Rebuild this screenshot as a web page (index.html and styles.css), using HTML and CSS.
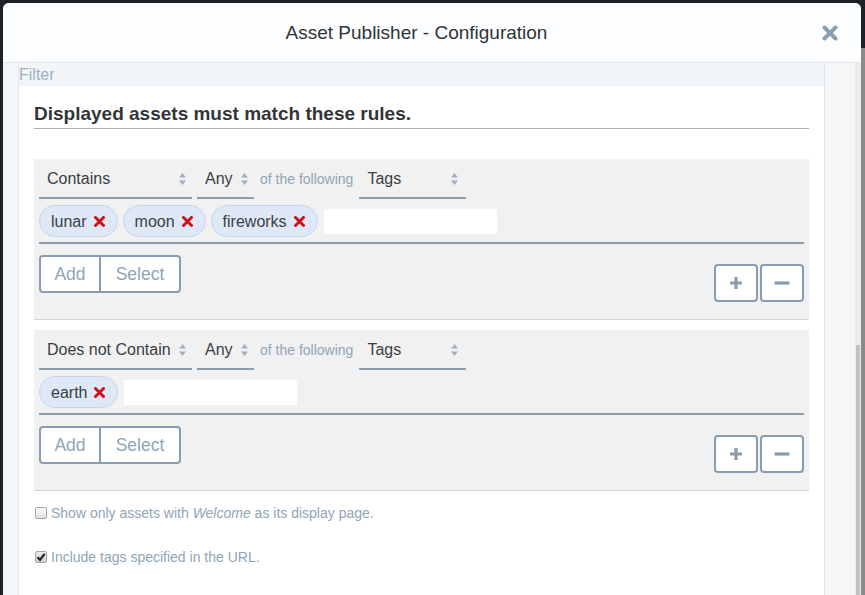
FILE: index.html
```html
<!DOCTYPE html>
<html lang="en">
<head>
<meta charset="utf-8">
<title>Asset Publisher - Configuration</title>
<link rel="stylesheet" href="styles.css">
</head>
<body>
<div class="screen">
  <div class="modal">
    <header class="modal-header">
      <h1 class="modal-title">Asset Publisher - Configuration</h1>
      <button class="close" type="button" aria-label="Close">
        <svg width="16" height="16" viewBox="0 0 16 16"><path d="M2.5 2.5 L13.5 13.5 M13.5 2.5 L2.5 13.5" stroke="#8aa0b2" stroke-width="4" stroke-linecap="round" fill="none"/></svg>
      </button>
    </header>
    <div class="modal-body">
      <div class="gutter-left"></div>
      <main class="panel">
        <div class="filter-bar">Filter</div>
        <div class="panel-inner">
          <h2 class="rules-title">Displayed assets must match these rules.</h2>

          <div class="rule">
            <div class="select-row">
              <div class="select sel-wide"><span>Contains</span><svg class="arrows" width="7" height="12" viewBox="0 0 7 12"><path d="M3.5 0 L7 4.5 L0 4.5 Z M3.5 12 L7 7.5 L0 7.5 Z" fill="#9fb1c1"/></svg></div>
              <div class="select sel-any"><span>Any</span><svg class="arrows" width="7" height="12" viewBox="0 0 7 12"><path d="M3.5 0 L7 4.5 L0 4.5 Z M3.5 12 L7 7.5 L0 7.5 Z" fill="#9fb1c1"/></svg></div>
              <span class="of-following">of the following</span>
              <div class="select sel-tags"><span>Tags</span><svg class="arrows" width="7" height="12" viewBox="0 0 7 12"><path d="M3.5 0 L7 4.5 L0 4.5 Z M3.5 12 L7 7.5 L0 7.5 Z" fill="#9fb1c1"/></svg></div>
            </div>
            <div class="tag-row">
              <span class="tag">lunar<svg class="x" width="11" height="11" viewBox="0 0 11 11"><path d="M1.5 1.5 L9.5 9.5 M9.5 1.5 L1.5 9.5" stroke="#d0101a" stroke-width="3" stroke-linecap="round"/></svg></span>
              <span class="tag">moon<svg class="x" width="11" height="11" viewBox="0 0 11 11"><path d="M1.5 1.5 L9.5 9.5 M9.5 1.5 L1.5 9.5" stroke="#d0101a" stroke-width="3" stroke-linecap="round"/></svg></span>
              <span class="tag">fireworks<svg class="x" width="11" height="11" viewBox="0 0 11 11"><path d="M1.5 1.5 L9.5 9.5 M9.5 1.5 L1.5 9.5" stroke="#d0101a" stroke-width="3" stroke-linecap="round"/></svg></span>
              <span class="tag-input"></span>
            </div>
            <div class="button-row">
              <div class="btn-group">
                <span class="btn btn-add">Add</span>
                <span class="btn btn-select">Select</span>
              </div>
              <div class="pm-group">
                <span class="pm"><svg width="14" height="14" viewBox="0 0 14 14"><path d="M7 1 V13 M1 7 H13" stroke="#8a9db0" stroke-width="3.2"/></svg></span>
                <span class="pm"><svg width="16" height="14" viewBox="0 0 16 14"><path d="M0.5 7 H15.5" stroke="#8a9db0" stroke-width="3.2"/></svg></span>
              </div>
            </div>
          </div>

          <div class="rule">
            <div class="select-row">
              <div class="select sel-wide"><span>Does not Contain</span><svg class="arrows" width="7" height="12" viewBox="0 0 7 12"><path d="M3.5 0 L7 4.5 L0 4.5 Z M3.5 12 L7 7.5 L0 7.5 Z" fill="#9fb1c1"/></svg></div>
              <div class="select sel-any"><span>Any</span><svg class="arrows" width="7" height="12" viewBox="0 0 7 12"><path d="M3.5 0 L7 4.5 L0 4.5 Z M3.5 12 L7 7.5 L0 7.5 Z" fill="#9fb1c1"/></svg></div>
              <span class="of-following">of the following</span>
              <div class="select sel-tags"><span>Tags</span><svg class="arrows" width="7" height="12" viewBox="0 0 7 12"><path d="M3.5 0 L7 4.5 L0 4.5 Z M3.5 12 L7 7.5 L0 7.5 Z" fill="#9fb1c1"/></svg></div>
            </div>
            <div class="tag-row">
              <span class="tag">earth<svg class="x" width="11" height="11" viewBox="0 0 11 11"><path d="M1.5 1.5 L9.5 9.5 M9.5 1.5 L1.5 9.5" stroke="#d0101a" stroke-width="3" stroke-linecap="round"/></svg></span>
              <span class="tag-input"></span>
            </div>
            <div class="button-row">
              <div class="btn-group">
                <span class="btn btn-add">Add</span>
                <span class="btn btn-select">Select</span>
              </div>
              <div class="pm-group">
                <span class="pm"><svg width="14" height="14" viewBox="0 0 14 14"><path d="M7 1 V13 M1 7 H13" stroke="#8a9db0" stroke-width="3.2"/></svg></span>
                <span class="pm"><svg width="16" height="14" viewBox="0 0 16 14"><path d="M0.5 7 H15.5" stroke="#8a9db0" stroke-width="3.2"/></svg></span>
              </div>
            </div>
          </div>

          <label class="check check-first">
            <span class="box"></span>
            <span>Show only assets with <em>Welcome</em> as its display page.</span>
          </label>
          <label class="check check-second">
            <span class="box box-checked"><svg width="10" height="10" viewBox="0 0 10 10"><path d="M1.5 5.2 L4 7.8 L8.6 1.8" stroke="#222" stroke-width="2.2" fill="none"/></svg></span>
            <span>Include tags specified in the URL.</span>
          </label>
        </div>
      </main>
      <div class="gutter-right"></div>
      <div class="scrollbar"><div class="track"></div><div class="thumb"></div></div>
    </div>
  </div>
  <div class="edge"><div class="edge-top"></div><div class="edge-bottom"></div></div>
</div>
</body>
</html>
```

FILE: styles.css
```css
* { box-sizing: border-box; }
html, body { margin: 0; padding: 0; }
body {
  width: 865px;
  height: 595px;
  overflow: hidden;
  background: #1b2126;
  font-family: "Liberation Sans", Arial, sans-serif;
}
.screen {
  display: flex;
  height: 595px;
  padding: 3px 0 0 3px;
}
.modal {
  width: 858px;
  height: 592px;
  display: flex;
  flex-direction: column;
  background: #f5f7f9;
  border-radius: 6px 6px 0 0;
  overflow: hidden;
}
.modal-header {
  height: 60px;
  flex: 0 0 60px;
  display: flex;
  align-items: center;
  padding: 0 15px 0 16px;
  background: #fcfdfe;
  border-bottom: 1px solid #e3e7eb;
}
.modal-title {
  flex: 1;
  margin: 0;
  text-align: center;
  font-size: 19px;
  font-weight: normal;
  color: #2f3438;
}
.close {
  width: 32px;
  height: 32px;
  border: 0;
  padding: 0;
  background: transparent;
  display: flex;
  align-items: center;
  justify-content: center;
}
.modal-body {
  flex: 1;
  display: flex;
  min-height: 0;
}
.gutter-left {
  width: 15px;
  flex: 0 0 15px;
  background: #f5f6f8;
}
.panel {
  width: 807px;
  flex: 0 0 807px;
  background: #ffffff;
  border-left: 1px solid #e2e5e9;
  border-right: 1px solid #e2e5e9;
}
.filter-bar {
  height: 23px;
  line-height: 23px;
  background: #f3f6f8;
  color: #9db1c2;
  font-size: 16px;
  padding-left: 0;
}
.panel-inner {
  padding: 0 15px 0 15px;
}
.rules-title {
  margin: 17px 0 30px;
  padding-bottom: 3px;
  line-height: 22px;
  font-size: 19px;
  font-weight: bold;
  color: #333638;
  border-bottom: 1px solid #a8b2bc;
}
.rule {
  background: #f1f1f1;
  border-bottom: 1px solid #d5d5d5;
  padding: 3px 5px 17px;
}
.rule + .rule { margin-top: 10px; }
.select-row {
  display: flex;
  align-items: flex-start;
  height: 37px;
}
.select {
  height: 37px;
  display: flex;
  align-items: center;
  justify-content: space-between;
  padding: 0 6px 1px 8px;
  border-bottom: 2px solid #8b9cad;
  font-size: 16px;
  color: #393e43;
}
.sel-wide { width: 153px; }
.sel-any { width: 57px; margin-left: 5px; }
.sel-tags { width: 107px; padding-right: 8px; }
.arrows { flex: 0 0 auto; }
.of-following {
  margin: 0 6px 0 6px;
  height: 35px;
  line-height: 35px;
  font-size: 14px;
  color: #8fa5b8;
}
.tag-row {
  margin-top: 6px;
  display: flex;
  align-items: center;
  gap: 5px;
  padding-bottom: 5px;
  border-bottom: 2px solid #8b9cad;
}
.tag {
  height: 32px;
  display: inline-flex;
  align-items: center;
  gap: 7px;
  padding: 1px 12px 0 11px;
  background: #dfe8f6;
  border: 1px solid #c6d5ec;
  border-radius: 16px;
  font-size: 16px;
  color: #3b4045;
}
.tag-input {
  width: 173px;
  height: 25px;
  margin-left: 1px;
  background: #ffffff;
}
.button-row {
  margin-top: 11px;
  display: flex;
  justify-content: space-between;
  align-items: flex-start;
}
.btn-group {
  display: flex;
  height: 38px;
  background: #ffffff;
  border: 2px solid #8a9db0;
  border-radius: 4px;
}
.btn {
  display: flex;
  align-items: center;
  justify-content: center;
  font-size: 17.5px;
  color: #8fa5b8;
}
.btn-add { width: 60px; border-right: 2px solid #8a9db0; }
.btn-select { width: 78px; }
.pm-group {
  display: flex;
  gap: 2px;
  margin-top: 9px;
}
.pm {
  width: 44px;
  height: 38px;
  display: flex;
  align-items: center;
  justify-content: center;
  background: #ffffff;
  border: 2px solid #8a9db0;
  border-radius: 4px;
}
.check {
  display: flex;
  align-items: center;
  gap: 4px;
  height: 18px;
  padding-left: 1px;
  font-size: 14px;
  color: #8fa5b8;
}
.check-first { margin-top: 13px; }
.check-second { margin-top: 26px; }
.box {
  width: 12px;
  height: 12px;
  border: 1px solid #a5a5a5;
  border-radius: 2px;
  background: linear-gradient(#fdfdfd, #e1e1e1);
  display: flex;
  align-items: center;
  justify-content: center;
}
.box-checked { background: linear-gradient(#e9e9e9, #cfcfcf); }
.gutter-right {
  width: 30px;
  flex: 0 0 30px;
  background: #f4f6f8;
}
.scrollbar {
  flex: 1;
  display: flex;
  flex-direction: column;
  background: #ececec;
}
.track { height: 282px; flex: 0 0 282px; }
.thumb { flex: 1; background: #c1c1c1; margin: 0 1px; }
.edge {
  width: 4px;
  flex: 0 0 4px;
  display: flex;
  flex-direction: column;
  margin-top: -3px;
}
.edge-top { height: 48px; background: #1b2126; }
.edge-bottom { flex: 1; background: #8a8a8a; }
```
